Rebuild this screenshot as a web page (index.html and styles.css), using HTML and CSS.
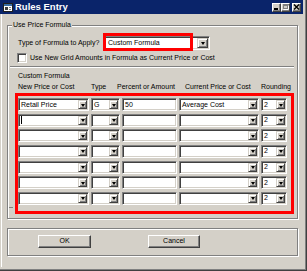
FILE: index.html
```html
<!DOCTYPE html>
<html lang="en">
<head>
    <meta charset="UTF-8">
    <title>Rules Entry</title>
    <link rel="stylesheet" href="styles.css">
</head>
<body>
    <div class="window">
        <div class="titlebar">
            <svg class="app-icon" width="10" height="9" viewBox="0 0 10 9">
                <rect x="0.5" y="0.5" width="9" height="8" fill="#fff" stroke="#202020"/>
                <rect x="1" y="1" width="8" height="2" fill="#3a6ea5"/>
                <rect x="2" y="4" width="3" height="3" fill="#404040"/>
                <rect x="6" y="4" width="2" height="1" fill="#808080"/>
                <rect x="6" y="6" width="2" height="1" fill="#808080"/>
            </svg>
            <span class="title">Rules Entry</span>
            <div class="caption-buttons">
                <span class="cap-btn">
                    <svg width="7" height="6" viewBox="0 0 7 6"><rect x="1" y="4" width="4" height="2" fill="#000"/></svg>
                </span>
                <span class="cap-btn">
                    <svg width="7" height="6" viewBox="0 0 7 6"><rect x="1.5" y="0.5" width="4" height="4" fill="none" stroke="#808080"/><rect x="1" y="1" width="5" height="1" fill="#808080"/><path d="M6.5 1.5v4h-5" fill="none" stroke="#fff"/></svg>
                </span>
                <span class="cap-btn close">
                    <svg width="7" height="6" viewBox="0 0 7 6"><path d="M1 0.5l5 5M6 0.5l-5 5" stroke="#000" stroke-width="1.4"/></svg>
                </span>
            </div>
        </div>

        <div class="client">
            <fieldset class="group main-group">
                <legend>Use Price Formula</legend>

                <div class="formula-row">
                    <label class="formula-label">Type of Formula to Apply?</label>
                    <div class="combo formula-combo">
                        <span class="combo-text">Custom Formula</span>
                        <span class="combo-btn"></span>
                        <span class="highlight"></span>
                    </div>
                </div>

                <div class="check-row">
                    <span class="checkbox"></span>
                    <span>Use New Grid Amounts in Formula as Current Price or Cost</span>
                </div>

                <div class="separator"></div>

                <div class="section-title">Custom Formula</div>

                <div class="grid-head">
                    <span>New Price or Cost</span>
                    <span>Type</span>
                    <span class="head-percent">Percent or Amount</span>
                    <span class="head-current">Current Price or Cost</span>
                    <span>Rounding</span>
                </div>

                <div class="grid-wrap">
                    <span class="edge-mark"></span>
                    <div class="grid-box">
                        <div class="rows" id="rows"></div>
                    </div>
                </div>
            </fieldset>

            <div class="group button-group">
                <button class="btn">OK</button>
                <button class="btn cancel">Cancel</button>
            </div>
        </div>
    </div>

    <script>
        const rowData = [
            { target: 'Retail Price', type: 'G', amount: '50', base: 'Average Cost', round: '2' },
            { target: '', type: '', amount: '', base: '', round: '2', caret: true },
            { target: '', type: '', amount: '', base: '', round: '2' },
            { target: '', type: '', amount: '', base: '', round: '2' },
            { target: '', type: '', amount: '', base: '', round: '2' },
            { target: '', type: '', amount: '', base: '', round: '2' },
            { target: '', type: '', amount: '', base: '', round: '2' }
        ];

        function combo(text, caret) {
            return `<div class="combo cell-combo">
                <span class="combo-text">${caret ? '<span class="caret"></span>' : ''}${text}</span>
                <span class="combo-btn"></span>
            </div>`;
        }

        const rows = document.getElementById('rows');
        rows.innerHTML = rowData.map(r =>
            combo(r.target, r.caret) +
            combo(r.type) +
            `<div class="textbox"><span class="combo-text">${r.amount}</span></div>` +
            combo(r.base) +
            combo(r.round)
        ).join('');
    </script>
</body>
</html>
```

FILE: styles.css
```css
:root {
    --face: #d4d0c8;
    --shadow: #808080;
    --dark: #404040;
    --light: #ffffff;
    --title: #0a246a;
    --mark: #ff0000;
}

* {
    margin: 0;
    padding: 0;
    box-sizing: border-box;
}

body {
    background-color: var(--face);
    font-family: 'Liberation Sans', Arial, sans-serif;
    font-size: 7px;
    line-height: 8px;
    color: #000;
}

.window {
    width: 307px;
    height: 271px;
    display: flex;
    flex-direction: column;
    background-color: var(--face);
    border-right: 1px solid var(--dark);
    border-bottom: 1px solid var(--dark);
    box-shadow: inset -1px -1px 0 var(--shadow);
    padding: 0 3px 3px 0;
}

/* title bar */
.titlebar {
    height: 14px;
    flex-shrink: 0;
    display: flex;
    align-items: center;
    background-color: var(--title);
    padding-left: 3px;
}

.app-icon {
    display: block;
}

.title {
    color: #fff;
    font-weight: bold;
    font-size: 9.5px;
    margin-left: 2px;
}

.caption-buttons {
    margin-left: auto;
    display: flex;
    padding-right: 2px;
}

.cap-btn {
    width: 9px;
    height: 9px;
    display: flex;
    align-items: center;
    justify-content: center;
    background-color: var(--face);
    border: 1px solid;
    border-color: var(--light) var(--dark) var(--dark) var(--light);
    box-shadow: inset -1px -1px 0 var(--shadow);
}

.cap-btn svg {
    display: block;
}

.cap-btn.close {
    margin-left: 2px;
}

/* client area */
.client {
    flex: 1;
    margin-left: 1px;
    border-left: 1px solid var(--light);
    display: flex;
    flex-direction: column;
}

.group {
    border: 1px solid var(--shadow);
    box-shadow: inset 1px 1px 0 var(--light), 1px 1px 0 var(--light);
}

.main-group {
    margin: 7px 5px 0 5px;
    padding: 0 0 4px 0;
    min-width: 0;
}

.main-group legend {
    margin-left: 4px;
    padding: 0 1px;
    background-color: var(--face);
    line-height: 8px;
}

.formula-row {
    display: flex;
    align-items: center;
    height: 14px;
    margin-top: 7px;
    padding-left: 10px;
}

.formula-label {
    width: 86px;
}

/* combo boxes */
.combo,
.textbox {
    position: relative;
    display: flex;
    align-items: center;
    background-color: #fff;
    border: 1px solid;
    border-color: var(--shadow) var(--light) var(--light) var(--shadow);
    box-shadow: inset 1px 1px 0 var(--dark), inset -1px -1px 0 var(--face);
    padding: 1px;
}

.combo-text {
    flex: 1;
    min-width: 0;
    padding-left: 1px;
    white-space: nowrap;
    overflow: hidden;
    display: flex;
    align-items: center;
}

.combo-btn {
    position: relative;
    align-self: stretch;
    width: 9px;
    flex-shrink: 0;
    background-color: var(--face);
    border: 1px solid;
    border-color: var(--face) var(--dark) var(--dark) var(--face);
    box-shadow: inset 1px 1px 0 var(--light), inset -1px -1px 0 var(--shadow);
}

.combo-btn::after {
    content: '';
    position: absolute;
    left: 50%;
    top: 50%;
    margin: -1px 0 0 -2px;
    border-left: 2.5px solid transparent;
    border-right: 2.5px solid transparent;
    border-top: 3px solid #000;
}

.formula-combo {
    width: 106px;
    height: 14px;
}

.formula-combo .combo-btn {
    width: 11px;
}

.formula-combo .combo-text {
    padding-left: 2px;
}

.highlight {
    position: absolute;
    left: -2px;
    top: -4px;
    width: 90px;
    height: 18px;
    border: 3px solid var(--mark);
}

/* checkbox line */
.check-row {
    display: flex;
    align-items: center;
    height: 10px;
    margin-top: 3px;
    padding-left: 9px;
    white-space: nowrap;
}

.checkbox {
    width: 10px;
    height: 10px;
    margin-right: 3px;
    background-color: #fff;
    border: 1px solid;
    border-color: var(--shadow) var(--light) var(--light) var(--shadow);
    box-shadow: inset 1px 1px 0 var(--dark), inset -1px -1px 0 var(--face);
}

.separator {
    height: 2px;
    margin: 3px 3px 0 2px;
    border-top: 1px solid var(--shadow);
    border-bottom: 1px solid var(--light);
}

.section-title {
    margin-top: 4px;
    padding-left: 10px;
}

/* grid */
.grid-head,
.rows {
    display: grid;
    grid-template-columns: 71px 29px 55px 80px 26px;
    column-gap: 2px;
}

.grid-head {
    margin-top: 3px;
    padding-left: 10px;
    white-space: nowrap;
}

.head-percent {
    margin-left: -5px;
}

.head-current {
    margin-left: 6px;
}

.grid-wrap {
    display: flex;
    align-items: flex-end;
    margin: 2px 3px 0 1px;
}

.edge-mark {
    width: 4px;
    height: 1px;
    margin: 0 2px 6px 0;
    background-color: var(--shadow);
}

.grid-box {
    flex: 1;
    border: 3px solid var(--mark);
    padding: 2px 0 6px 0;
}

.rows {
    grid-auto-rows: 13px;
    row-gap: 2.67px;
}

.cell-combo .combo-text,
.textbox .combo-text {
    padding-left: 1px;
}

.caret {
    width: 1px;
    height: 8px;
    background-color: #000;
}

/* buttons */
.button-group {
    height: 28px;
    margin: 9px 5px 0 5px;
    display: flex;
    padding: 6px 0 0 30px;
}

.btn {
    width: 53px;
    height: 13px;
    font-family: inherit;
    font-size: 7px;
    line-height: 8px;
    color: #000;
    background-color: var(--face);
    border: 1px solid;
    border-color: var(--light) var(--dark) var(--dark) var(--light);
    box-shadow: inset -1px -1px 0 var(--shadow);
}

.btn.cancel {
    width: 52px;
    margin-left: 57px;
}
```
